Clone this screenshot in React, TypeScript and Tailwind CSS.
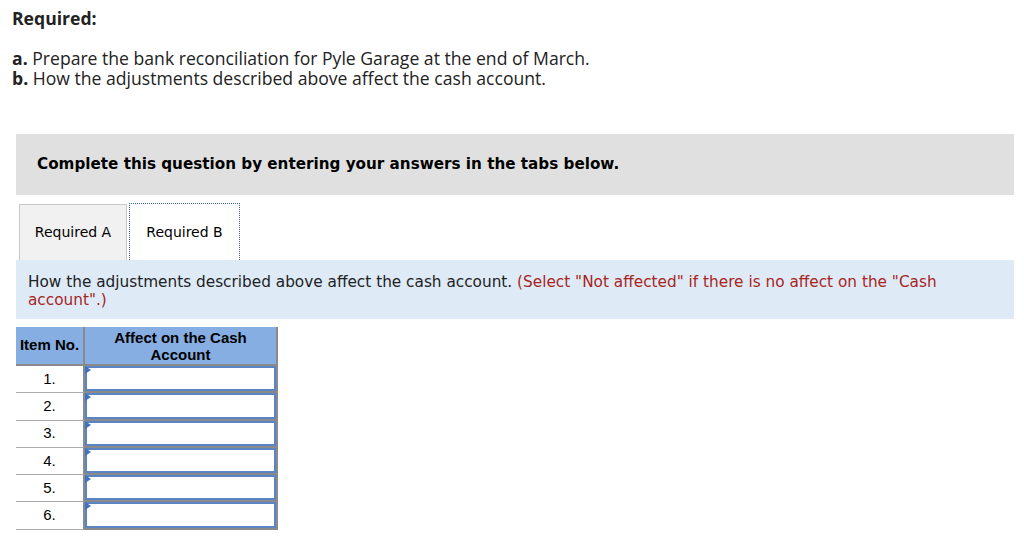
import React from "react";

const rows = ["1.", "2.", "3.", "4.", "5.", "6."];

const InputCell: React.FC = () => (
  <div className="relative h-full border-2 border-[#5b84c4] bg-white">
    <div className="absolute -left-[2px] -top-[2px] h-0 w-0 border-y-[4px] border-l-[6px] border-y-transparent border-l-[#3f72c0]" />
  </div>
);

export default function App() {
  return (
    <div className="h-[536px] w-[1024px] overflow-hidden bg-white text-[#222]">
      <div className="pl-[12px] pt-[8px] font-['Open_Sans','Liberation_Sans',sans-serif] text-[17.6px] leading-[20px]">
        <div className="font-bold">Required:</div>
        <div className="mt-[20px]">
          <b>a.</b> Prepare the bank reconciliation for Pyle Garage at the end of March.
        </div>
        <div>
          <b>b.</b> How the adjustments described above affect the cash account.
        </div>
      </div>

      <div className="ml-[16px] mt-[46px] w-[998px] font-['DejaVu_Sans','Verdana',sans-serif]">
        <div className="flex h-[61px] items-center bg-[#e0e0e0] pl-[21px] text-[15.2px] font-bold text-black">
          Complete this question by entering your answers in the tabs below.
        </div>

        <div className="mt-[8px] flex items-end gap-[2px] pl-[3px]">
          <div className="flex h-[56px] w-[108px] items-center justify-center border border-b-0 border-[#c8c8c8] bg-[#f1f1f1] text-[14px] text-black">
            Required A
          </div>
          <div className="flex h-[57px] w-[111px] items-center justify-center border border-dotted border-b-0 border-[#3a5fa6] bg-white text-[14px] text-black">
            Required B
          </div>
        </div>

        <div className="h-[59px] bg-[#deebf7] pl-[12px] pr-[20px] pt-[13px] text-[15.3px] leading-[18px] text-[#222]">
          How the adjustments described above affect the cash account.{" "}
          <span className="text-[#a8241d]">
            (Select "Not affected" if there is no affect on the "Cash account".)
          </span>
        </div>

        <div className="mt-[8px] w-[262px] font-['Liberation_Sans','Arial',sans-serif] text-[15px] text-black">
          <div className="flex h-[39px] border-b-2 border-[#8a8a8a] bg-[#86aee2]">
            <div className="flex w-[69px] items-center justify-center border-r-2 border-[#8a8a8a] font-bold">
              Item No.
            </div>
            <div className="flex flex-1 items-center justify-center border-r-2 border-[#8a8a8a] text-center font-bold leading-[17px]">
              Affect on the Cash
              <br />
              Account
            </div>
          </div>
          {rows.map((r) => (
            <div key={r} className="flex h-[27.3px]">
              <div className="flex w-[69px] items-center justify-center border-b border-r-2 border-b-[#aaa] border-r-[#8a8a8a]">
                {r}
              </div>
              <div className="flex-1 border-r-2 border-b-2 border-[#8a8a8a]">
                <InputCell />
              </div>
            </div>
          ))}
        </div>
      </div>
    </div>
  );
}
